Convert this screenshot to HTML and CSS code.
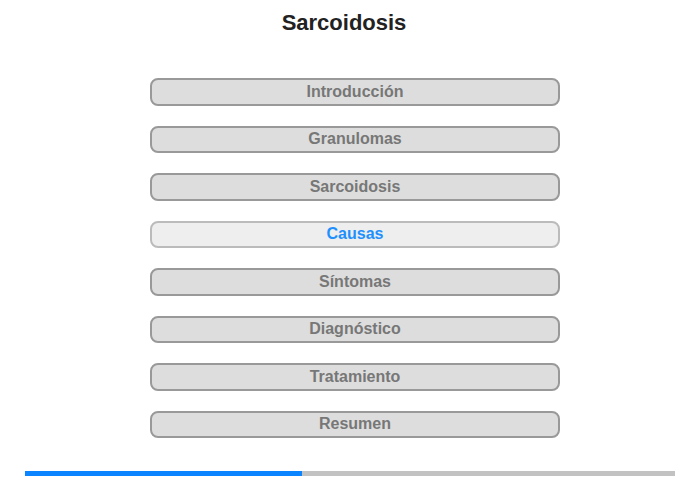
FILE: index.html
```html
<!DOCTYPE html>
<html lang="es">
<head>
    <meta charset="UTF-8">
    <meta name="viewport" content="width=device-width, initial-scale=1.0">
    <title>Sarcoidosis</title>
    <link rel="stylesheet" href="styles.css">
</head>
<body>
    <header>
        <h1>Sarcoidosis</h1>
    </header>

    <nav class="menu">
        <button class="menu-item">Introducción</button>
        <button class="menu-item">Granulomas</button>
        <button class="menu-item">Sarcoidosis</button>
        <button class="menu-item active">Causas</button>
        <button class="menu-item">Síntomas</button>
        <button class="menu-item">Diagnóstico</button>
        <button class="menu-item">Tratamiento</button>
        <button class="menu-item">Resumen</button>
    </nav>

    <div class="progress">
        <div class="progress-fill" style="width: 42.6%"></div>
    </div>
</body>
</html>
```

FILE: styles.css
```css
body {
    font-family: "Liberation Sans", Arial, sans-serif;
    margin: 0;
    padding: 0;
    background-color: #ffffff;
    width: 700px;
}

header {
    padding: 10px 12px 0 0;
    text-align: center;
}

header h1 {
    margin: 0;
    font-size: 22px;
    line-height: 26px;
    color: #222222;
}

.menu {
    display: flex;
    flex-direction: column;
    align-items: flex-start;
    gap: 20px;
    margin-top: 42px;
    padding-left: 150px;
}

.menu-item {
    width: 410px;
    height: 27.5px;
    padding: 0;
    font-family: "Liberation Sans", Arial, sans-serif;
    font-size: 16px;
    font-weight: bold;
    color: #777777;
    background-color: #dddddd;
    border: 2px solid #999999;
    border-radius: 8px;
    cursor: pointer;
}

.menu-item.active {
    color: #1e90ff;
    background-color: #eeeeee;
    border-color: #bbbbbb;
}

.progress {
    margin: 33px 25px 0;
    height: 5px;
    background-color: #c2c2c2;
}

.progress-fill {
    height: 100%;
    background-color: #0a84ff;
}
```
